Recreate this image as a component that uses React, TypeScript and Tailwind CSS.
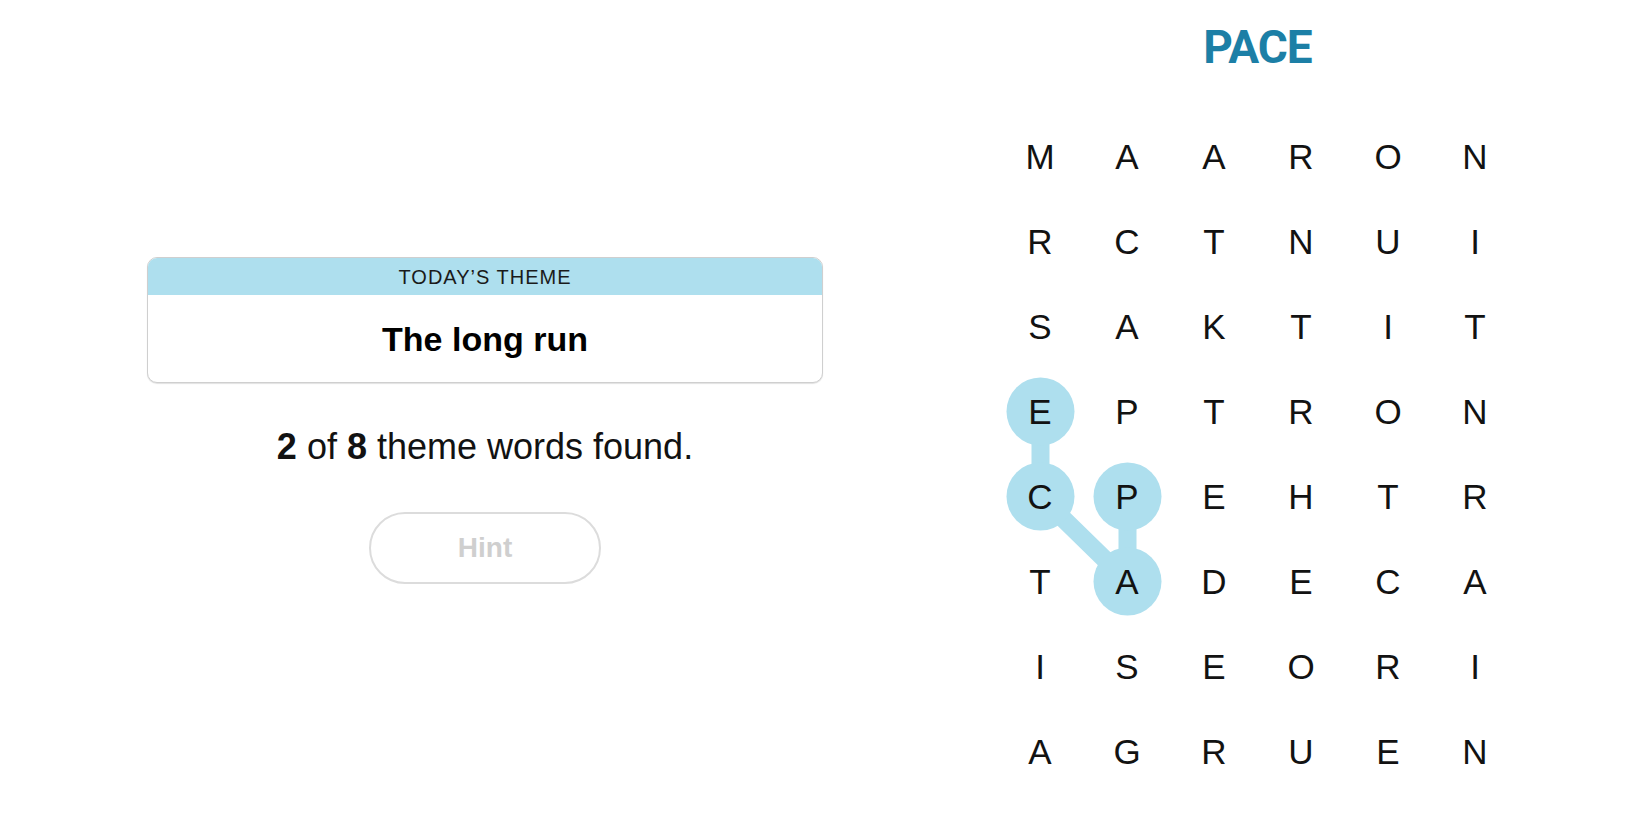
import React from "react";

const GRID = [
  ["M", "A", "A", "R", "O", "N"],
  ["R", "C", "T", "N", "U", "I"],
  ["S", "A", "K", "T", "I", "T"],
  ["E", "P", "T", "R", "O", "N"],
  ["C", "P", "E", "H", "T", "R"],
  ["T", "A", "D", "E", "C", "A"],
  ["I", "S", "E", "O", "R", "I"],
  ["A", "G", "R", "U", "E", "N"],
];

// selected cells, in order of the path: [col, row]
const PATH: [number, number][] = [
  [0, 3],
  [0, 4],
  [1, 5],
  [1, 4],
];

const CELL_W = 87;
const CELL_H = 85;

const cx = (c: number) => CELL_W / 2 + CELL_W * c;
const cy = (r: number) => CELL_H / 2 + CELL_H * r;

function ThemeCard() {
  return (
    <div className="w-[676px] rounded-[10px] border border-[#cfcfcf] shadow-[0_1px_1px_rgba(0,0,0,0.12)] overflow-hidden bg-white">
      <div className="h-[37px] bg-[#aedfee] flex items-center justify-center">
        <span className="text-[20px] tracking-[1px] text-[#1a1a1a] leading-none">
          TODAY’S THEME
        </span>
      </div>
      <div className="h-[87px] flex items-center justify-center">
        <span className="text-[34px] font-bold text-black leading-none">
          The long run
        </span>
      </div>
    </div>
  );
}

function LetterGrid() {
  return (
    <div className="relative w-[522px] h-[680px]">
      <svg
        className="absolute inset-0"
        width={522}
        height={680}
        viewBox="0 0 522 680"
      >
        <polyline
          points={PATH.map(([c, r]) => `${cx(c)},${cy(r)}`).join(" ")}
          fill="none"
          stroke="#aedfee"
          strokeWidth={18}
          strokeLinejoin="round"
        />
        {PATH.map(([c, r]) => (
          <circle key={`${c}-${r}`} cx={cx(c)} cy={cy(r)} r={34} fill="#aedfee" />
        ))}
      </svg>
      <div className="relative grid grid-cols-6 grid-rows-8">
        {GRID.flat().map((ch, i) => (
          <div
            key={i}
            className="w-[87px] h-[85px] flex items-center justify-center text-[35px] text-[#121212] leading-none"
          >
            {ch}
          </div>
        ))}
      </div>
    </div>
  );
}

export default function App() {
  return (
    <div
      className="w-[1650px] h-[825px] bg-white flex"
      style={{ fontFamily: '"Liberation Sans", Arial, sans-serif' }}
    >
      <div className="w-[970px] flex flex-col items-center pt-[257px]">
        <ThemeCard />
        <p className="mt-[46px] text-[36px] text-[#121212] leading-none">
          <b>2</b> of <b>8</b> theme words found.
        </p>
        <button className="mt-[47px] w-[232px] h-[72px] rounded-full border-2 border-[#dcdcdc] text-[28px] font-bold text-[#cfcfcf]">
          Hint
        </button>
      </div>
      <div className="w-[575px] flex flex-col items-center">
        <h1 className="mt-[24px] h-[90px] font-['Roboto',sans-serif] text-[46px] font-bold tracking-[-1px] text-[#1c7fa6] leading-none">
          PACE
        </h1>
        <LetterGrid />
      </div>
    </div>
  );
}
